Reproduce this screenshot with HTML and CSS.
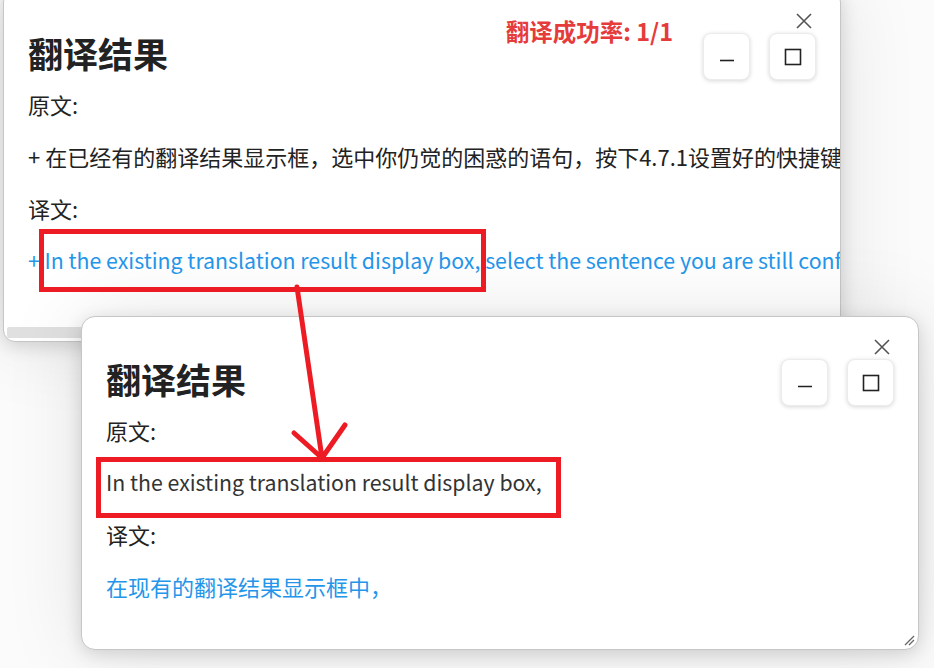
FILE: index.html
```html
<!DOCTYPE html>
<html lang="zh-CN">
<head>
<meta charset="utf-8">
<title>翻译结果</title>
<link rel="stylesheet" href="styles.css">
</head>
<body>
<div class="desk">
  <section class="win win-back">
    <header class="win-head">
      <h1 class="win-title">翻译结果</h1>
      <span class="rate">翻译成功率: 1/1</span>
      <div class="win-btns">
        <button class="wbtn"><svg width="16" height="16" viewBox="0 0 16 16"><path d="M1 11.5h14" stroke="#222" stroke-width="1.6"/></svg></button>
        <button class="wbtn"><svg width="18" height="18" viewBox="0 0 18 18"><rect x="1.5" y="1.5" width="15" height="15" fill="none" stroke="#222" stroke-width="1.6"/></svg></button>
      </div>
      <button class="win-close"><svg width="16" height="16" viewBox="0 0 16 16"><path d="M1 1L15 15M15 1L1 15" stroke="#555" stroke-width="1.6"/></svg></button>
    </header>
    <div class="win-body">
      <p class="label">原文:</p>
      <p class="src">+ 在已经有的翻译结果显示框，选中你仍觉的困惑的语句，按下4.7.1设置好的快捷键，即可进行翻译</p>
      <p class="label">译文:</p>
      <p class="dst en">+ In the existing translation result display box, select the sentence you are still confused about, press the shortcut key set in 4.7.1</p>
    </div>
    <div class="hscroll"></div>
  </section>

  <section class="win win-front">
    <header class="win-head">
      <h1 class="win-title">翻译结果</h1>
      <div class="win-btns">
        <button class="wbtn"><svg width="16" height="16" viewBox="0 0 16 16"><path d="M1 11.5h14" stroke="#222" stroke-width="1.6"/></svg></button>
        <button class="wbtn"><svg width="18" height="18" viewBox="0 0 18 18"><rect x="1.5" y="1.5" width="15" height="15" fill="none" stroke="#222" stroke-width="1.6"/></svg></button>
      </div>
      <button class="win-close"><svg width="16" height="16" viewBox="0 0 16 16"><path d="M1 1L15 15M15 1L1 15" stroke="#555" stroke-width="1.6"/></svg></button>
    </header>
    <div class="win-body">
      <p class="label">原文:</p>
      <p class="src en">In the existing translation result display box,</p>
      <p class="label">译文:</p>
      <p class="dst">在现有的翻译结果显示框中，</p>
    </div>
    <svg class="grip" width="12" height="12" viewBox="0 0 12 12"><path d="M2 11L11 2M6 11L11 6" stroke="#666" stroke-width="1.3"/></svg>
  </section>

  <svg class="marks" width="934" height="668" viewBox="0 0 934 668">
    <rect x="41.5" y="231.5" width="442" height="58" fill="none" stroke="#ed1c24" stroke-width="5"/>
    <rect x="98.5" y="459.5" width="460" height="56" fill="none" stroke="#ed1c24" stroke-width="5"/>
    <path d="M297 287L322 458M294 433L322 458M345 425L322 458" fill="none" stroke="#ed1c24" stroke-width="5" stroke-linecap="round" stroke-linejoin="round"/>
  </svg>
</div>
</body>
</html>
```

FILE: styles.css
```css
html, body {
  margin: 0;
  padding: 0;
  background: #fbfbfb;
}
.desk {
  position: relative;
  width: 934px;
  height: 668px;
  overflow: hidden;
  font-family: "Noto Sans CJK SC", "Noto Sans", sans-serif;
  color: #222;
}
.win {
  position: absolute;
  width: 838px;
  box-sizing: border-box;
  background: #fff;
  border: 1px solid #c6c6c6;
  border-radius: 14px;
  overflow: hidden;
  box-shadow: 0 0 80px rgba(0, 0, 0, 0.10), 0 4px 18px rgba(0, 0, 0, 0.14);
}
.win-back {
  left: 3px;
  top: -10px;
  border-radius: 12px;
}
.win-front {
  left: 81px;
  top: 316px;
}
.win-head {
  position: relative;
  display: flex;
  align-items: flex-start;
  height: 88px;
  padding: 0 24px;
}
.win-title {
  margin: 40px 0 0;
  font-size: 35px;
  line-height: 44px;
  font-weight: 700;
  color: #222;
}
.rate {
  margin: 25px 30px 0 auto;
  font-size: 23.5px;
  line-height: 30px;
  font-weight: 700;
  color: #e63b3b;
}
.win-btns {
  margin: 42px 0 0 auto;
  display: flex;
  gap: 19px;
}
.rate + .win-btns {
  margin-left: 0;
}
.wbtn {
  width: 47px;
  height: 47px;
  padding: 0;
  display: flex;
  align-items: center;
  justify-content: center;
  background: #fff;
  border: 1px solid #ececec;
  border-radius: 8px;
  box-shadow: 0 1px 4px rgba(0, 0, 0, 0.16);
}
.win-close {
  position: absolute;
  top: 22px;
  right: 28px;
  width: 16px;
  height: 16px;
  padding: 0;
  border: 0;
  background: none;
  display: flex;
}
.win-body {
  padding: 10px 0 26px 24px;
}
.win-body p {
  margin: 0 0 22px;
  font-size: 22px;
  line-height: 30px;
  white-space: nowrap;
}
.win-body p.en {
  font-size: 21.3px;
}
.label {
  color: #222;
}
.src {
  color: #222;
}
.src.en {
  color: #333;
}
.dst {
  color: #2496ea;
}
.hscroll {
  height: 11px;
  margin: 4px 3px 3px;
  background: #e0e0e0;
  border-radius: 2px;
}
.grip {
  position: absolute;
  right: 3px;
  bottom: 3px;
}
.marks {
  position: absolute;
  left: 0;
  top: 0;
  pointer-events: none;
}
```
